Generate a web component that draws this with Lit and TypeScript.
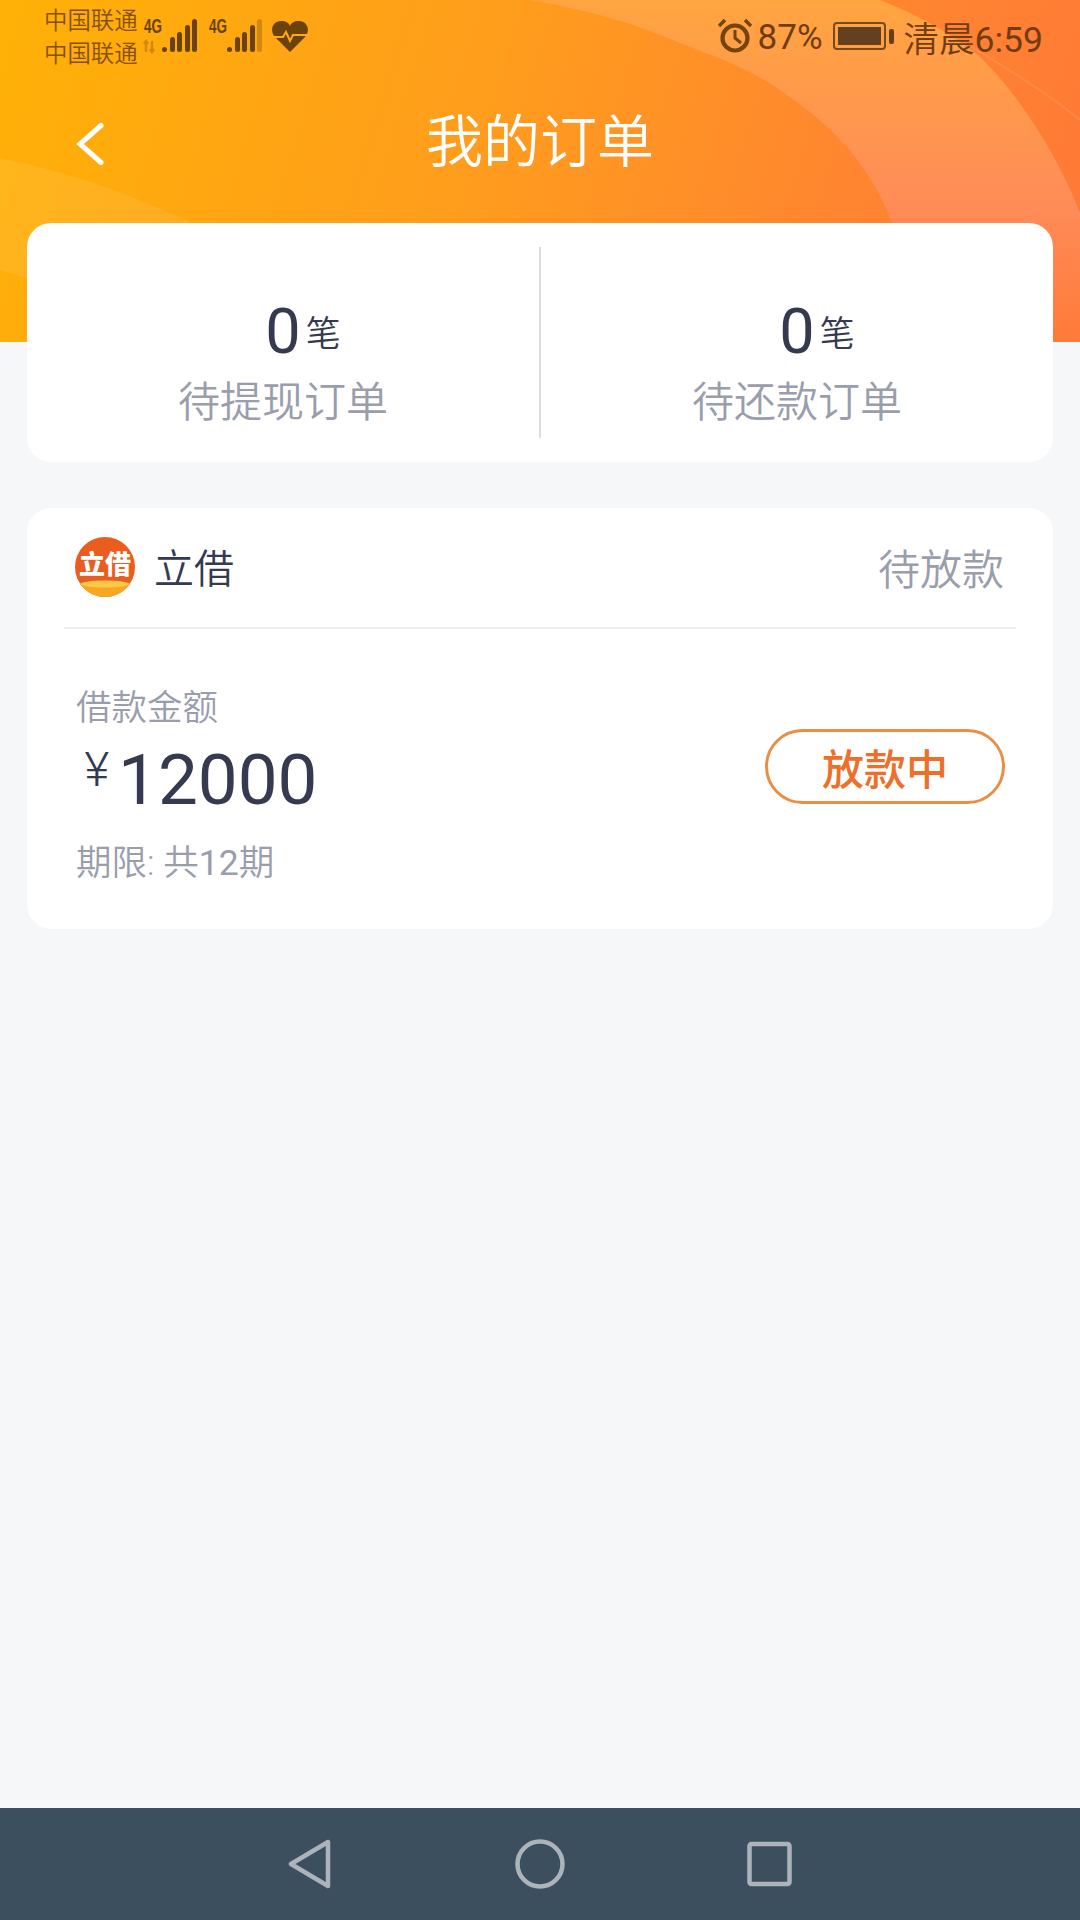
import { LitElement, html, svg, css } from "lit";
import { customElement } from "lit/decorators.js";

@customElement("app-root")
export class AppRoot extends LitElement {
  static styles = css`
    :host {
      display: flex;
      flex-direction: column;
      width: 1080px;
      height: 1920px;
      overflow: hidden;
      background: #f6f7f9;
      font-family: Roboto, "Noto Sans CJK SC", sans-serif;
      color: #353a50;
    }
    .hero { position: relative; height: 342px; flex: none; overflow: hidden; }
    .waves { position: absolute; inset: 0; width: 1080px; height: 342px; }
    .status {
      position: relative;
      display: flex;
      align-items: flex-start;
      height: 72px;
      padding: 0 37px 0 44px;
    }
    .carriers { display: flex; flex-direction: column; font-size: 23.4px; line-height: 33px; padding-top: 5px; color: #85500f; width: 96px; flex: none; font-weight: 350; }
    .signals { flex: none; margin-top: 10px; }
    .spacer { flex: 1; }
    .sys { display: flex; align-items: center; height: 72px; color: #713c12; }
    .sys svg { flex: none; }
    .pct { font-size: 35px; margin: 0 10px 0 5px; padding-top: 2px; }
    .clock { font-size: 35.5px; margin-left: 9px; }
    .thin { font-weight: 350; }
    .titlebar {
      position: relative;
      display: grid;
      grid-template-columns: 1fr auto 1fr;
      align-items: center;
      height: 140px;
      padding: 0 76px;
    }
    .back { margin-top: 3px; }
    .titlebar h1 { margin: 0; padding-top: 1px; font-size: 57px; font-weight: 350; color: #fff; line-height: 70px; }
    .content { display: flex; flex-direction: column; gap: 46px; padding: 0 27px; margin-top: -119px; position: relative; flex: 1; }
    .card { background: #fff; border-radius: 24px; }
    .stats { display: flex; align-items: center; height: 239px; }
    .stat { flex: 1; display: flex; flex-direction: column; align-items: stretch; padding-top: 42px; }
    .count { display: grid; grid-template-columns: 1fr auto 1fr; align-items: center; line-height: 70px; height: 70px; }
    .num { grid-column: 2; font-size: 63px; color: #353a50; }
    .unit { grid-column: 3; font-size: 35px; line-height: 44px; margin: 6px 0 0 5px; color: #353a50; font-weight: 350; }
    .stat-label { text-align: center; font-size: 42px; line-height: 56px; margin-top: 8px; color: #9a9dac; font-weight: 350; }
    .vline { width: 2px; height: 191px; background: #dcdde0; flex: none; }
    .order { height: 421px; padding: 0 37px; box-sizing: border-box; display: flex; flex-direction: column; }
    .order-head {
      display: flex;
      align-items: center;
      height: 121px;
      padding: 0 12px 3px 10px;
      box-sizing: border-box;
      border-bottom: 2px solid #eeeef0;
      flex: none;
    }
    .logo { flex: none; margin-top: 2px; }
    .name { font-size: 40px; margin-left: 18px; flex: 1; color: #353a50; font-weight: 350; }
    .state { font-size: 42px; color: #9a9dac; font-weight: 350; }
    .order-body { display: flex; justify-content: space-between; align-items: flex-start; padding: 59px 11px 0 12px; }
    .amount-label { font-size: 35.5px; line-height: 40px; color: #9a9dac; font-weight: 350; }
    .amount { display: flex; align-items: flex-start; height: 84px; margin-top: 10px; line-height: 84px; }
    .yen { font-size: 48px; line-height: 48px; font-weight: 300; width: 42px; text-align: center; margin-top: 8px; color: #353a50; }
    .value { font-size: 71px; color: #353a50; }
    .term { font-size: 35.5px; line-height: 40px; margin-top: 21px; color: #9a9dac; }
    .pill {
      box-sizing: border-box;
      width: 240px;
      height: 75px;
      margin-top: 41px;
      border: 3px solid #e98f45;
      border-radius: 38px;
      display: flex;
      align-items: center;
      justify-content: center;
      font-size: 42px;
      font-weight: 500;
      color: #ee6f2a;
    }
    .nav {
      flex: none;
      height: 112px;
      background: #3c4f5f;
      display: grid;
      grid-template-columns: 50px 50px 50px;
      justify-content: center;
      column-gap: 180px;
      align-items: center;
    }
  `;

  private bars(x: number, dim: boolean) {
    const hs = [5, 15, 20, 27, 33];
    const ws = [0, 8, 15, 23, 30];
    return hs.map(
      (h, i) =>
        svg`<rect x=${x + ws[i]} y=${42 - h} width="5" height=${h} rx="2.5" fill="#6b4209" opacity=${dim && i === 4 ? 0.3 : 1}></rect>`
    );
  }

  render() {
    return html`
      <div class="hero">
        <svg class="waves" viewBox="0 0 1080 342" preserveAspectRatio="none">
          <defs>
            <linearGradient id="bg" gradientUnits="userSpaceOnUse" x1="0" y1="0" x2="1040" y2="320">
              <stop offset="0" stop-color="#ffb106"></stop>
              <stop offset="0.45" stop-color="#ff9d1c"></stop>
              <stop offset="0.8" stop-color="#ff8530"></stop>
              <stop offset="1" stop-color="#ff7a36"></stop>
            </linearGradient>
            <linearGradient id="band" gradientUnits="userSpaceOnUse" x1="0" y1="0" x2="0" y2="342">
              <stop offset="0" stop-color="#ffa540"></stop>
              <stop offset="0.6" stop-color="#ff8c58"></stop>
              <stop offset="0.72" stop-color="#ff8650"></stop>
              <stop offset="1" stop-color="#ff7a38"></stop>
            </linearGradient>
          </defs>
          <rect width="1080" height="342" fill="url(#bg)"></rect>
          <path d="M530 0 C600 12 640 26 680 43 C720 58 752 70 780 90 C812 112 830 128 847 147 C868 172 882 196 892 222 L910 342 L1080 342 L1080 213 C1060 160 1020 95 980 57 C950 32 915 14 880 0 Z" fill="url(#band)"></path>
          <path d="M960 40 C1010 70 1050 95 1080 120" fill="none" stroke="#ffa06a" stroke-width="2" opacity="0.35"></path>
          <path d="M0 158 C70 172 130 194 190 222 L190 300 L27 278 L0 270 Z" fill="#ffffff" opacity="0.08"></path>
        </svg>

        <div class="status">
          <div class="carriers"><span>中国联通</span><span>中国联通</span></div>
          <svg class="signals" width="170" height="46" viewBox="0 0 170 46">
            <text x="4" y="23" font-family="Liberation Sans, sans-serif" font-weight="700" font-size="21" textLength="18" lengthAdjust="spacingAndGlyphs" fill="#6b4209">4G</text>
            <path d="M6 31 v11 M4 34 l2 -3 2 3 M12 31 v11 M10 39 l2 3 2 -3" stroke="#6b4209" stroke-width="2.4" fill="none" opacity="0.3"></path>
            ${this.bars(22, false)}
            <text x="69" y="23" font-family="Liberation Sans, sans-serif" font-weight="700" font-size="21" textLength="18" lengthAdjust="spacingAndGlyphs" fill="#6b4209">4G</text>
            ${this.bars(87, true)}
            <path d="M150 42 L135 27 C129 20 133 11 141 11 C146 11 149 13 150 16 C151 13 154 11 159 11 C167 11 171 20 165 27 Z" fill="#6b4209"></path>
            <path d="M132 27 H143 L146 22 L150 31 L153 25 H170" fill="none" stroke="#ffa81a" stroke-width="2"></path>
          </svg>
          <div class="spacer"></div>
          <div class="sys">
            <svg width="36" height="36" viewBox="0 0 36 36">
              <circle cx="18" cy="20" r="12.5" fill="none" stroke="#74430f" stroke-width="4.2"></circle>
              <path d="M18 12 V20 L24 25" fill="none" stroke="#74430f" stroke-width="3"></path>
              <path d="M2 8 L8 2 M34 8 L28 2" stroke="#74430f" stroke-width="3.4"></path>
            </svg>
            <span class="pct">87%</span>
            <svg width="62" height="30" viewBox="0 0 62 30">
              <rect x="1" y="2" width="51" height="26" rx="3" fill="none" stroke="#7a4a18" stroke-width="2"></rect>
              <rect x="5" y="6" width="43" height="18" fill="#63401f"></rect>
              <rect x="56" y="8" width="5" height="15" rx="2" fill="#6a3d14"></rect>
            </svg>
            <span class="clock"><span class="thin">清晨</span>6:59</span>
          </div>
        </div>

        <div class="titlebar">
          <svg class="back" width="28" height="44" viewBox="0 0 28 44">
            <path d="M25 3.5 L4 22 L25 40.5" fill="none" stroke="#fff" stroke-width="5" stroke-linecap="round" stroke-linejoin="miter"></path>
          </svg>
          <h1>我的订单</h1>
          <span></span>
        </div>
      </div>

      <div class="content">
        <section class="card stats">
          <div class="stat">
            <div class="count"><span class="num">0</span><span class="unit">笔</span></div>
            <div class="stat-label">待提现订单</div>
          </div>
          <div class="vline"></div>
          <div class="stat">
            <div class="count"><span class="num">0</span><span class="unit">笔</span></div>
            <div class="stat-label">待还款订单</div>
          </div>
        </section>

        <section class="card order">
          <div class="order-head">
            <svg class="logo" width="62" height="62" viewBox="0 0 62 62">
              <defs><clipPath id="lc"><circle cx="31" cy="31" r="30"></circle></clipPath></defs>
              <circle cx="31" cy="31" r="30" fill="#ea5d1f"></circle>
              <g clip-path="url(#lc)">
                <path d="M0 48 Q31 42 62 48 V62 H0 Z" fill="#f8a81e"></path>
                <ellipse cx="31" cy="48" rx="24" ry="3.5" fill="#fbc84a"></ellipse>
              </g>
              <text x="31" y="38" text-anchor="middle" font-family="Noto Sans CJK SC, sans-serif" font-weight="900" font-size="26" fill="#fff">立借</text>
            </svg>
            <span class="name">立借</span>
            <span class="state">待放款</span>
          </div>
          <div class="order-body">
            <div>
              <div class="amount-label">借款金额</div>
              <div class="amount"><span class="yen">¥</span><span class="value">12000</span></div>
              <div class="term"><span class="thin">期限:</span> <span class="thin">共</span>12<span class="thin">期</span></div>
            </div>
            <div class="pill">放款中</div>
          </div>
        </section>
      </div>

      <nav class="nav">
        <svg width="50" height="50" viewBox="0 0 50 50">
          <path d="M43 3 V47 L6 25 Z" fill="none" stroke="#adb3ba" stroke-width="4.5" stroke-linejoin="round"></path>
        </svg>
        <svg width="50" height="50" viewBox="0 0 50 50">
          <ellipse cx="25" cy="25" rx="22.5" ry="22.5" fill="none" stroke="#adb3ba" stroke-width="4.5"></ellipse>
        </svg>
        <svg width="50" height="50" viewBox="0 0 50 50">
          <rect x="4.5" y="5" width="40" height="40" rx="2" fill="none" stroke="#adb3ba" stroke-width="4.5"></rect>
        </svg>
      </nav>
    `;
  }
}
